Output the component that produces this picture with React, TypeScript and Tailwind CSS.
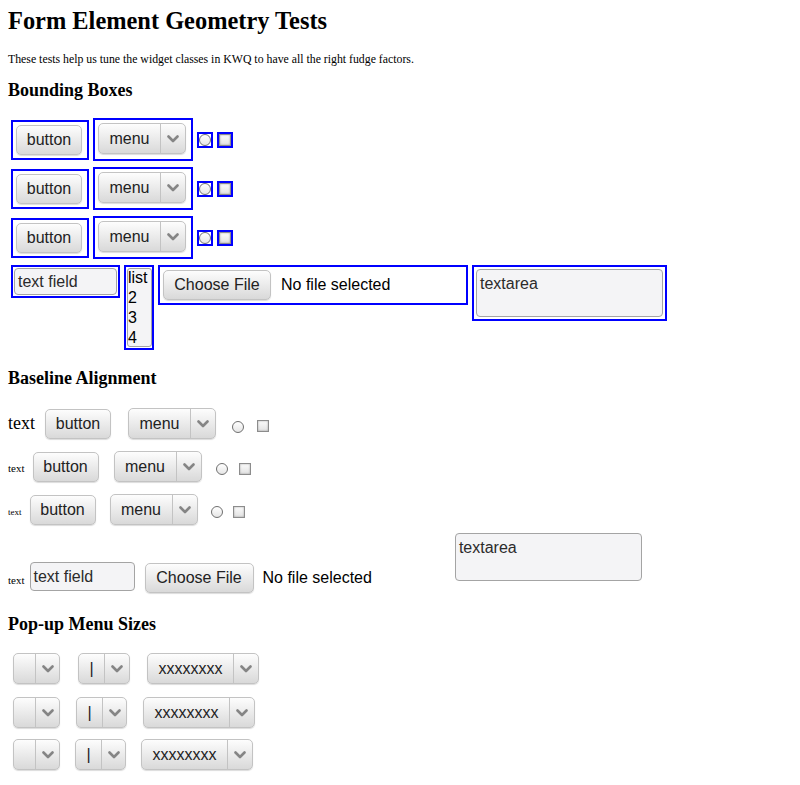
import type { ReactNode } from 'react';

const sans = "font-['Liberation_Sans',Arial,sans-serif]";
const face = 'border border-[#c3c3c3] bg-linear-to-b from-[#fdfdfd] to-[#d9d9d9] shadow-[0_1px_1px_rgba(0,0,0,0.14)]';

function Chevron() {
  return (
    <svg width="12" height="8" viewBox="0 0 12 8" className="mt-[1px]">
      <polyline points="1.5,1.5 6,6 10.5,1.5" fill="none" stroke="#858585" strokeWidth="2.6" strokeLinecap="round" strokeLinejoin="round" />
    </svg>
  );
}

function Btn({ label, className = '' }: { label: string; className?: string }) {
  return (
    <span
      className={`inline-flex h-[30px] shrink-0 items-center justify-center rounded-[5px] text-[16px] leading-none text-[#222] ${face} ${sans} ${className}`}
    >
      {label}
    </span>
  );
}

function Menu({ children, w, lw, className = '' }: { children?: ReactNode; w: string; lw: string; className?: string }) {
  return (
    <span
      className={`inline-flex h-[31px] shrink-0 rounded-[5px] text-[16px] leading-none text-[#222] ${face} ${sans} ${w} ${className}`}
    >
      <span className={`flex items-center justify-center ${lw}`}>{children}</span>
      <span className="flex flex-1 items-center justify-center border-l border-[#c3c3c3]">
        <Chevron />
      </span>
    </span>
  );
}

function Radio({ className = '' }: { className?: string }) {
  return (
    <span
      className={`inline-block h-[12px] w-[12px] shrink-0 rounded-full border border-[#6f6f6f] bg-linear-to-b from-white to-[#e6e6e6] ${className}`}
    />
  );
}

function Check({ className = '' }: { className?: string }) {
  return (
    <span
      className={`inline-block h-[12px] w-[12px] shrink-0 border border-[#8c8c8c] bg-linear-to-b from-[#fbfbfb] to-[#e2e2e2] shadow-[inset_0_0_2px_rgba(0,0,0,0.35)] ${className}`}
    />
  );
}

function Field({ className = '' }: { className?: string }) {
  return (
    <span
      className={`flex items-center rounded-[4px] border border-[#a4a4a4] bg-[#f4f4f6] pl-[3px] text-[16px] leading-none text-[#2b2b2b] ${sans} ${className}`}
    >
      text field
    </span>
  );
}

function TextArea() {
  return (
    <div
      className={`h-[48px] w-[187px] rounded-[4px] border border-[#a4a4a4] bg-[#f4f4f6] px-[3px] pt-[5px] text-[16px] leading-[18px] text-[#2b2b2b] ${sans}`}
    >
      textarea
    </div>
  );
}

function H3({ children, className = '' }: { children: ReactNode; className?: string }) {
  return <h3 className={`text-[18px] font-bold leading-[20px] ${className}`}>{children}</h3>;
}

const box = 'border-2 border-[#0000ff]';

function BoxRow() {
  return (
    <div className="flex items-center gap-[4px] pl-[3px]">
      <div className={`${box} pb-[3px] pl-[3px] pr-[5px] pt-[3px]`}>
        <Btn label="button" className="w-[66px]" />
      </div>
      <div className={`${box} pb-[5px] pl-[3px] pr-[5px] pt-[3px]`}>
        <Menu w="w-[88px]" lw="w-[61px]">menu</Menu>
      </div>
      <div className={`${box} flex`}>
        <Radio />
      </div>
      <div className={`${box} flex`}>
        <Check />
      </div>
    </div>
  );
}

export default function App() {
  return (
    <div className="min-h-[785px] bg-white px-2 font-['Liberation_Serif','Times_New_Roman',serif] text-black">
      <h1 className="pt-[7px] text-[24.4px] font-bold leading-[28px]">Form Element Geometry Tests</h1>
      <p className="mt-[17px] text-[11.8px] leading-[14px]">
        These tests help us tune the widget classes in KWQ to have all the right fudge factors.
      </p>

      <H3 className="mt-[14px]">Bounding Boxes</H3>
      <div className="mt-[18px] flex flex-col gap-[6px]">
        <BoxRow />
        <BoxRow />
        <BoxRow />
        <div className="flex items-start gap-[4px] pl-[3px]">
          <div className={`${box} p-[1px]`}>
            <Field className="h-[27px] w-[103px]" />
          </div>
          <div className={`${box} pb-[1px] pl-[1px] pt-[1px]`}>
            <div
              className={`h-[79px] w-[25px] overflow-hidden rounded-[3px] border border-[#a4a4a4] bg-[#f4f4f6] text-[16px] leading-[20px] text-black ${sans}`}
            >
              <div className="-mt-[1px]">list</div>
              <div>2</div>
              <div>3</div>
              <div>4</div>
            </div>
          </div>
          <div className={`${box} flex h-[40px] w-[310px] items-start pl-[3px] pt-[3px]`}>
            <Btn label="Choose File" className="h-[29px] w-[108px]" />
            <span className={`ml-[10px] text-[16px] leading-[29px] text-black ${sans}`}>No file selected</span>
          </div>
          <div className={`${box} p-[2px]`}>
            <TextArea />
          </div>
        </div>
      </div>

      <H3 className="mt-[18px]">Baseline Alignment</H3>
      <div className="mt-[20px] flex items-baseline">
        <span className="text-[18px] leading-none">text</span>
        <Btn label="button" className="ml-[10px] w-[66px]" />
        <Menu w="w-[88px]" lw="w-[61px]" className="ml-[17px]">menu</Menu>
        <Radio className="ml-[16px] self-center mt-[6px]" />
        <Check className="ml-[13px] self-center mt-[5px]" />
      </div>
      <div className="mt-[12px] flex items-baseline">
        <span className="text-[11px] leading-none">text</span>
        <Btn label="button" className="ml-[8px] w-[66px]" />
        <Menu w="w-[88px]" lw="w-[61px]" className="ml-[15px]">menu</Menu>
        <Radio className="ml-[14px] self-center mt-[5px]" />
        <Check className="ml-[11px] self-center mt-[5px]" />
      </div>
      <div className="mt-[12px] flex items-baseline">
        <span className="text-[9px] leading-none">text</span>
        <Btn label="button" className="ml-[8px] w-[66px]" />
        <Menu w="w-[88px]" lw="w-[61px]" className="ml-[14px]">menu</Menu>
        <Radio className="ml-[13px] self-center mt-[4px]" />
        <Check className="ml-[10px] self-center mt-[4px]" />
      </div>
      <div className="mt-[8px] flex items-end">
        <span className="mb-[7px] text-[11px] leading-none">text</span>
        <Field className="mb-[2px] ml-[5px] h-[29px] w-[105px]" />
        <Btn label="Choose File" className="ml-[10px] w-[109px]" />
        <span className={`mb-[7px] ml-[9px] text-[16px] leading-none text-black ${sans}`}>No file selected</span>
        <div className="mb-[12px] ml-[83px]">
          <TextArea />
        </div>
      </div>

      <H3 className="mt-[21px]">Pop-up Menu Sizes</H3>
      <div className="mt-[19px] flex items-start pl-[5px]">
        <Menu w="w-[47px]" lw="w-[21px]" />
        <Menu w="w-[52px]" lw="w-[25px]" className="ml-[18px]">|</Menu>
        <Menu w="w-[112px]" lw="w-[85px]" className="ml-[17px]">xxxxxxxx</Menu>
      </div>
      <div className="mt-[13px] flex items-start pl-[5px]">
        <Menu w="w-[47px]" lw="w-[21px]" />
        <Menu w="w-[51px]" lw="w-[25px]" className="ml-[16px]">|</Menu>
        <Menu w="w-[112px]" lw="w-[85px]" className="ml-[16px]">xxxxxxxx</Menu>
      </div>
      <div className="mt-[11px] flex items-start pl-[5px]">
        <Menu w="w-[47px]" lw="w-[21px]" />
        <Menu w="w-[51px]" lw="w-[25px]" className="ml-[15px]">|</Menu>
        <Menu w="w-[112px]" lw="w-[85px]" className="ml-[15px]">xxxxxxxx</Menu>
      </div>
    </div>
  );
}
